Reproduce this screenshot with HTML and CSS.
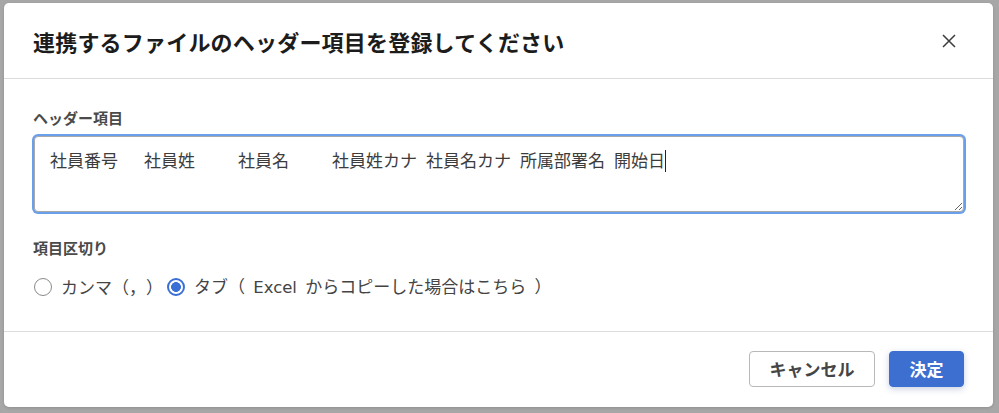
FILE: index.html
```html
<!DOCTYPE html>
<html lang="ja">
<head>
<meta charset="utf-8">
<title>ヘッダー項目の登録</title>
<link rel="stylesheet" href="styles.css">
</head>
<body>
<div class="backdrop">
  <div class="modal" role="dialog" aria-labelledby="dlg-title">
    <header class="modal-header">
      <h1 class="modal-title" id="dlg-title">連携するファイルのヘッダー項目を登録してください</h1>
      <button class="close-btn" type="button" aria-label="閉じる">
        <svg width="14" height="14" viewBox="0 0 14 14"><path d="M1 1 L13 13 M13 1 L1 13" stroke="#3c3c3c" stroke-width="1.5" fill="none"/></svg>
      </button>
    </header>
    <section class="modal-body">
      <label class="field-label" for="hdr">ヘッダー項目</label>
      <div class="textarea-wrap">
        <textarea id="hdr" class="field-textarea">社員番号&#9;社員姓&#9;社員名&#9;社員姓カナ&#9;社員名カナ&#9;所属部署名&#9;開始日</textarea>
        <span class="caret" aria-hidden="true"></span>
      </div>
      <div class="field-label sep-label">項目区切り</div>
      <div class="radio-row">
        <label class="radio-item"><input type="radio" name="sep" class="radio"><span>カンマ（，）</span></label>
        <label class="radio-item"><input type="radio" name="sep" class="radio" checked><span>タブ（<span class="latin"> Excel </span>からコピーした場合はこちら<span class="latin"> </span>）</span></label>
      </div>
    </section>
    <footer class="modal-footer">
      <button class="btn btn-cancel" type="button">キャンセル</button>
      <button class="btn btn-primary" type="button">決定</button>
    </footer>
  </div>
</div>
</body>
</html>
```

FILE: styles.css
```css
* { box-sizing: border-box; }
html, body { margin: 0; padding: 0; }
body {
  width: 999px;
  height: 413px;
  background: #a7a7a7;
  font-family: "Noto Sans CJK JP", "Noto Sans", sans-serif;
  overflow: hidden;
  text-spacing-trim: space-all;
}
.backdrop {
  padding: 3px 6px 6px 4px;
  height: 413px;
}
.modal {
  background: #fff;
  border-radius: 5px;
  height: 404px;
  display: flex;
  flex-direction: column;
  box-shadow: 0 1px 3px rgba(0,0,0,0.15);
}
.modal-header {
  height: 76px;
  border-bottom: 1px solid #dcdcdc;
  display: flex;
  align-items: center;
  justify-content: space-between;
  padding: 0 37px 0 29px;
  flex: none;
}
.modal-title {
  margin: 0;
  font-size: 22px;
  line-height: 30px;
  font-weight: 700;
  color: #1c1c1c;
  letter-spacing: 0.2px;
}
.close-btn {
  border: 0;
  background: none;
  padding: 0;
  width: 14px;
  height: 14px;
  display: flex;
  margin-top: 1px;
}
.modal-body {
  flex: 1;
  padding: 29px 29px 0 30px;
  display: flex;
  flex-direction: column;
  align-items: flex-start;
}
.field-label {
  font-size: 15px;
  line-height: 20px;
  font-weight: 700;
  color: #4a4a4a;
  margin-left: -1px;
}
.textarea-wrap {
  position: relative;
  width: 100%;
  margin-top: 8px;
}
.field-textarea {
  display: block;
  width: 100%;
  height: 76px;
  margin: 0;
  padding: 11px 15px;
  border: 1px solid #a9a9a9;
  border-radius: 4px;
  box-shadow: 0 0 0 2px #6a9fec;
  outline: none;
  font-family: "Noto Sans CJK JP", "Noto Sans", sans-serif;
  font-size: 17px;
  line-height: 24px;
  color: #3c3c3c;
  tab-size: 94px;
  -moz-tab-size: 94px;
  resize: vertical;
  white-space: pre;
  overflow: hidden;
  text-spacing-trim: space-all;
}
.caret {
  position: absolute;
  left: 631px;
  top: 14px;
  width: 1px;
  height: 22px;
  background: #222;
}
.sep-label {
  margin-top: 26px;
}
.radio-row {
  margin-top: 17px;
  display: flex;
  align-items: center;
  gap: 4px;
  height: 24px;
}
.radio-item {
  display: inline-flex;
  align-items: center;
  gap: 9px;
  font-family: "Noto Sans CJK JP", "Noto Sans", sans-serif;
  font-size: 17px;
  line-height: 24px;
  color: #444;
}
.latin {
  font-family: "DejaVu Sans", "Noto Sans", sans-serif;
  font-size: 16.5px;
  white-space: pre;
  word-spacing: 3px;
}
.radio {
  appearance: none;
  -webkit-appearance: none;
  margin: 0;
  width: 18px;
  height: 18px;
  border-radius: 50%;
  border: 1.5px solid #8a8a8a;
  background: #fff;
  flex: none;
}
.radio:checked {
  border: 2px solid #3a6fd6;
  background: radial-gradient(circle, #3a6fd6 0 4.6px, #fff 5.2px);
}
.modal-footer {
  height: 76px;
  border-top: 1px solid #dcdcdc;
  flex: none;
  display: flex;
  justify-content: flex-end;
  align-items: center;
  gap: 14px;
  padding: 0 29px 1px 0;
}
.btn {
  height: 36px;
  border-radius: 4px;
  font-family: "Noto Sans CJK JP", "Noto Sans", sans-serif;
  font-size: 17px;
  font-weight: 700;
  line-height: 20px;
  padding: 0;
}
.btn-cancel {
  width: 126px;
  background: #fff;
  border: 1px solid #b8b8b8;
  color: #454545;
}
.btn-primary {
  width: 75px;
  background: #3d6fd0;
  border: 1px solid #3d6fd0;
  color: #fff;
  box-shadow: 0 2px 6px rgba(40, 70, 140, 0.25);
}
```
